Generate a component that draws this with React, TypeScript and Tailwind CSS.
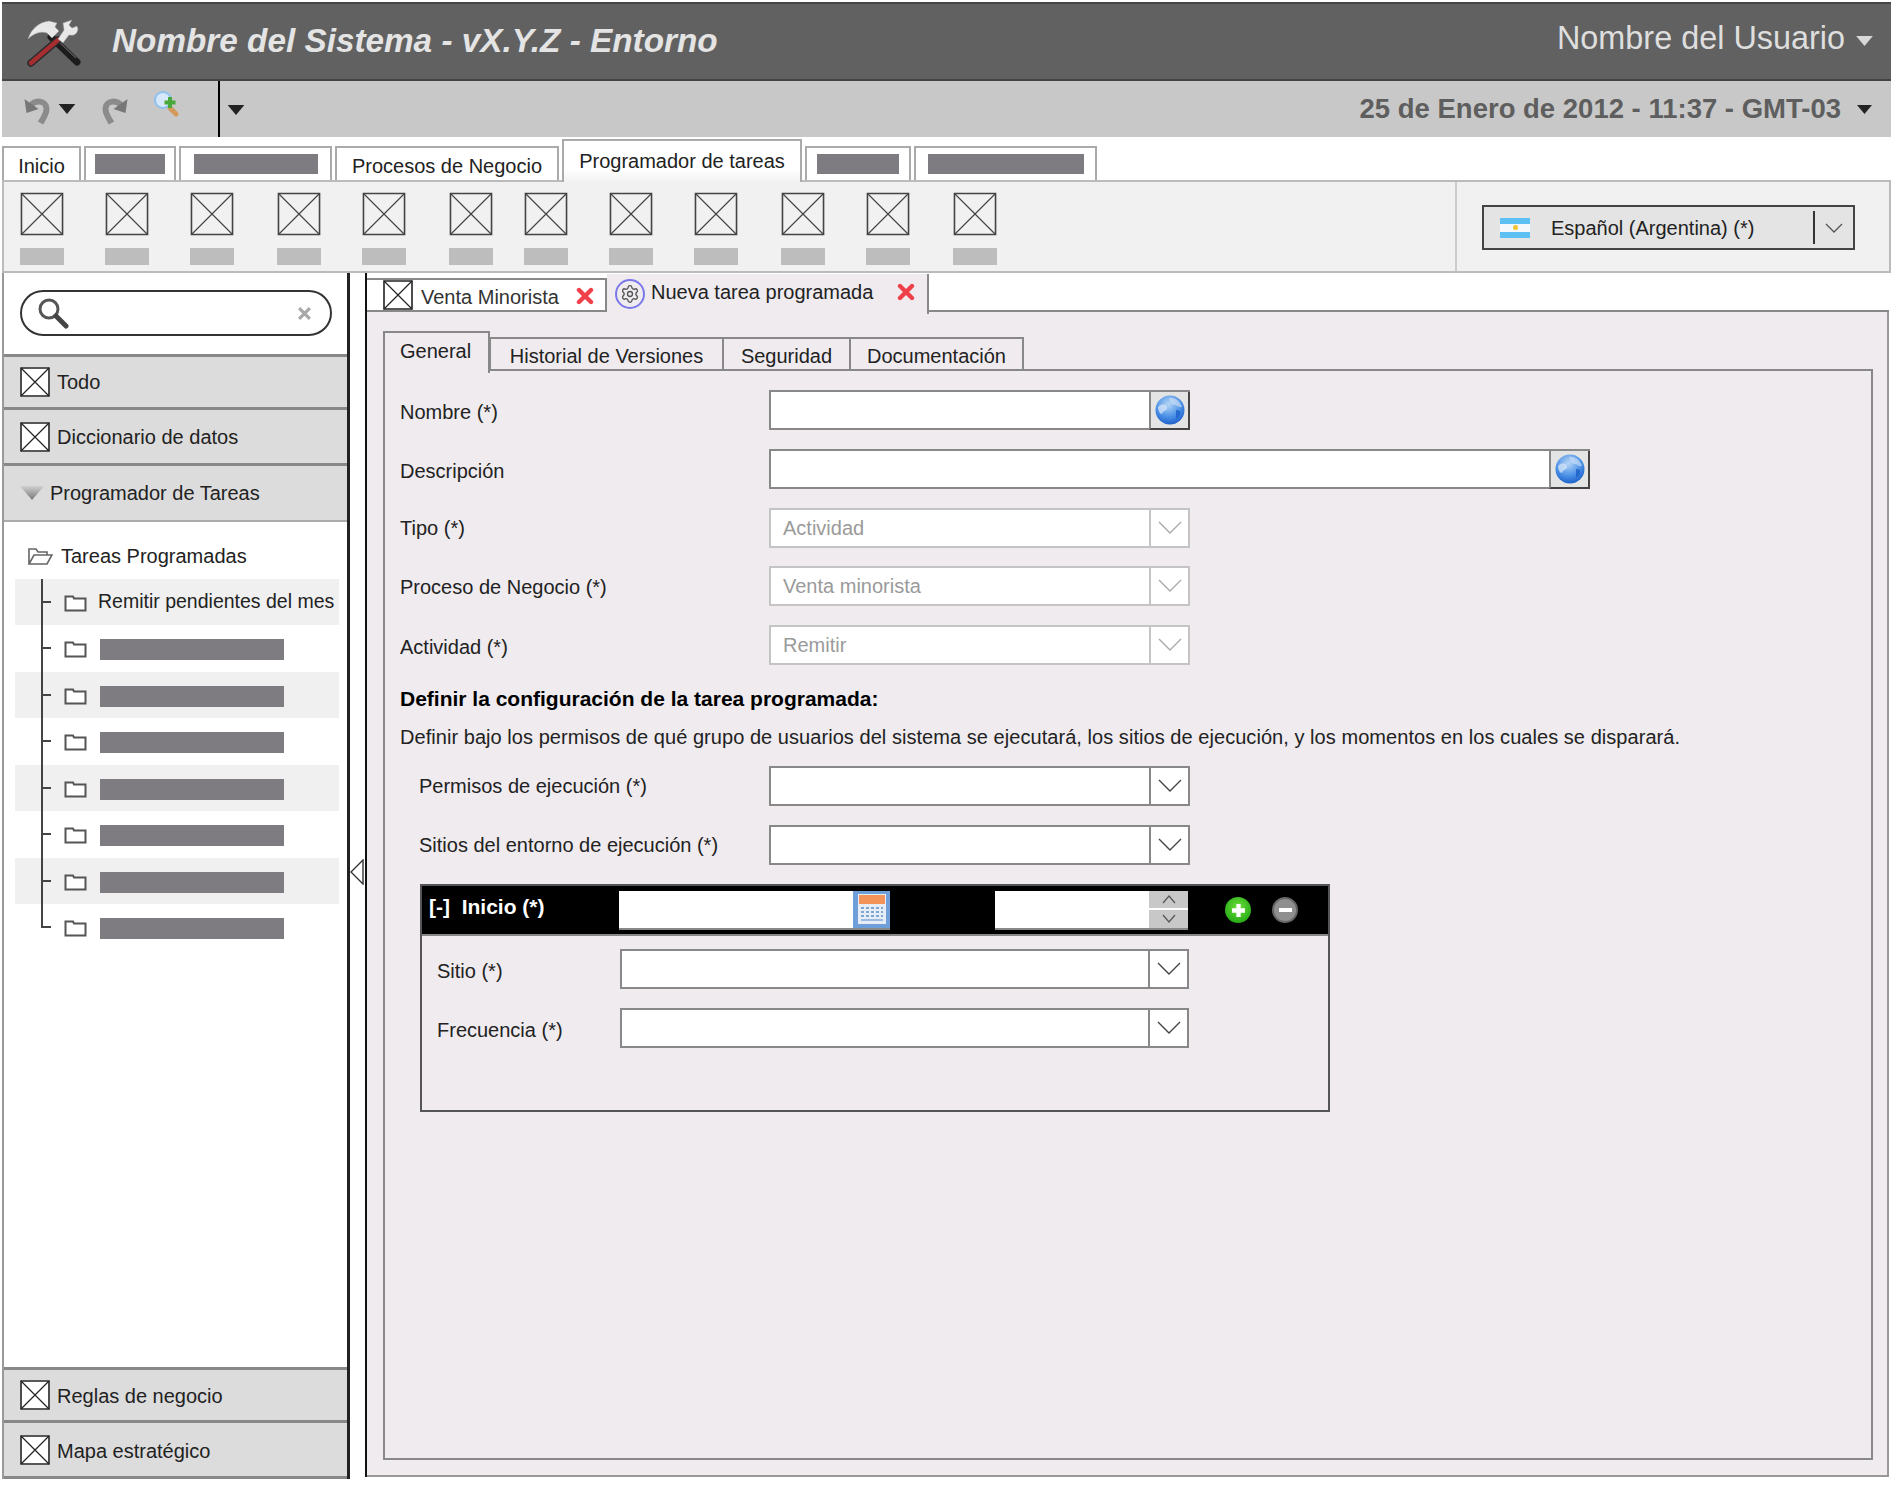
import { Settings } from "lucide-react";

const font = "font-['Liberation_Sans',Arial,sans-serif]";

// placeholder image: box with two diagonals
const XBox = ({ className, stroke = "#222" }: { className: string; stroke?: string }) => (
  <svg viewBox="0 0 30 30" preserveAspectRatio="none" className={className}>
    <rect x="1" y="1" width="28" height="28" fill="none" stroke={stroke} strokeWidth="1.6" vectorEffect="non-scaling-stroke" />
    <path d="M1 1L29 29M29 1L1 29" stroke={stroke} strokeWidth="1.2" vectorEffect="non-scaling-stroke" />
  </svg>
);

const Tri = ({ className, fill = "#222" }: { className: string; fill?: string }) => (
  <svg viewBox="0 0 10 6" className={className}>
    <path d="M0 0H10L5 6Z" fill={fill} />
  </svg>
);

const Chevron = ({ stroke = "#444" }: { stroke?: string }) => (
  <svg viewBox="0 0 24 14" className="w-[24px] h-[14px]">
    <path d="M1 1L12 12L23 1" fill="none" stroke={stroke} strokeWidth="1.4" />
  </svg>
);

const RedX = () => (
  <svg viewBox="0 0 18 18" className="w-[18px] h-[18px]">
    <path d="M3 3L15 15M15 3L3 15" stroke="#f0404a" strokeWidth="4.4" strokeLinecap="round" />
  </svg>
);

const Globe = ({ id }: { id: string }) => (
  <svg viewBox="0 0 30 30" className="w-[30px] h-[30px]">
    <defs>
      <radialGradient id={id} cx="0.45" cy="0.3" r="0.8">
        <stop offset="0" stopColor="#b7d6f5" />
        <stop offset="0.55" stopColor="#4a90e6" />
        <stop offset="1" stopColor="#0f50c0" />
      </radialGradient>
    </defs>
    <circle cx="15" cy="15" r="14.5" fill={`url(#${id})`} />
    <path d="M3 12C7 8 11 9 12 12C13 16 8 15 7 19C5 19 3 16 3 12Z" fill="#d5e6f8" opacity="0.75" />
    <path d="M14 3C20 2 25 6 27 12C23 13 22 10 20 10C17 10 15 7 14 3Z" fill="#d5e6f8" opacity="0.6" />
    <path d="M21 15C24 15 26 16 25 19C24 22 22 24 21 23Z" fill="#1c5fc8" opacity="0.8" />
  </svg>
);

// martillo y llave cruzados
const Logo = () => (
  <svg viewBox="0 0 56 50" className="w-[56px] h-[50px]">
    <path d="M24 20L50 45" stroke="#1c1c1c" strokeWidth="7" strokeLinecap="round" />
    <path d="M28 21L49 41" stroke="#5a5a5a" strokeWidth="1.2" />
    <path d="M4 46L31 23" stroke="#2a2a2a" strokeWidth="7.500" strokeLinecap="round" />
    <path d="M4 46L31 23" stroke="#a62d30" strokeWidth="4.500" strokeLinecap="round" />
    <path d="M1 22C4 12 12 5 22 4L30 6L28 10L32 14L25 21L20 16C14 14 7 16 1 22Z" fill="#e8e8e8" stroke="#999" strokeWidth="0.5" />
    <path d="M31 22L37 13L36 6L45 3L42 8L45 11L50 9L51 12C50 18 46 19 42 18L36 26Z" fill="#e8e8e8" stroke="#999" strokeWidth="0.5" />
  </svg>
);

const Undo = ({ flip }: { flip?: boolean }) => (
  <svg viewBox="0 0 28 32" className={flip ? "w-[29px] h-[32px] -scale-x-100" : "w-[29px] h-[32px]"}>
    <path d="M6 14C11 6 23 7 23 16C23 21 20 25 17 30" fill="none" stroke="#8b8b8b" strokeWidth="6" />
    <path d="M1 6L3 20L15 16Z" fill="#777" />
  </svg>
);

const ZoomPlus = () => (
  <svg viewBox="0 0 26 26" className="w-[26px] h-[26px]">
    <path d="M17 17L23 23" stroke="#d39a5c" strokeWidth="5" strokeLinecap="round" />
    <circle cx="10" cy="9" r="8" fill="#d5e9fb" stroke="#8fc0f0" strokeWidth="2" />
    <path d="M17 6V17M11.500 11.500H22.500" stroke="#49a83a" strokeWidth="4" />
  </svg>
);

const Flag = () => (
  <div className="w-[30px] h-[20px] flex flex-col">
    <div className="h-[6px] bg-[#5cc0f2]" />
    <div className="h-[8px] bg-[#f4f8fb] flex items-center justify-center">
      <div className="w-[5px] h-[5px] rounded-full bg-[#f2c531]" />
    </div>
    <div className="h-[6px] bg-[#5cc0f2]" />
  </div>
);

const Folder = ({ open }: { open?: boolean }) =>
  open ? (
    <svg viewBox="0 0 26 20" className="w-[26px] h-[20px]">
      <path d="M2 18V3H9L11 6H20V9M2 18H20L25 9H7Z" fill="none" stroke="#666" strokeWidth="1.6" />
    </svg>
  ) : (
    <svg viewBox="0 0 23 18" className="w-[23px] h-[18px] mt-[2px]">
      <path d="M1.500 3V16.500H21.500V4.500H10L9 2.500H1.500Z" fill="#fff" stroke="#555" strokeWidth="2" />
    </svg>
  );

const Bar = ({ className }: { className: string }) => <div className={`bg-[#7e7c80] ${className}`} />;

const ribbonCells = [
  "w-[85px]", "w-[85px]", "w-[87px]", "w-[85px]", "w-[87px]", "w-[75px]",
  "w-[85px]", "w-[85px]", "w-[87px]", "w-[85px]", "w-[87px]", "w-[60px]",
];

const Accordion = ({ label, top, textClass = "" }: { label: string; top?: boolean; textClass?: string }) => (
  <div className={`h-[56px] shrink-0 bg-[#dcdcdc] border-b-[3px] border-[#888] flex items-center pl-[16px] gap-[7px] text-[20px] text-[#222] ${top ? "border-t-[3px]" : ""}`}>
    <XBox className="w-[30px] h-[30px] bg-white" />
    <span className={textClass}>{label}</span>
  </div>
);

// text field with a button cell on the right
const Field = ({
  width,
  value,
  disabled,
  children,
  btnClass = "bg-white",
}: {
  width: string;
  value?: string;
  disabled?: boolean;
  children: React.ReactNode;
  btnClass?: string;
}) => (
  <div className={`${width} h-[40px] flex border-2 bg-white ${disabled ? "border-[#c4c4c4]" : "border-[#888]"}`}>
    <div className={`flex-1 flex items-center pl-[12px] text-[20px] ${disabled ? "text-[#9a9a9a]" : ""}`}>{value}</div>
    <div className={`w-[39px] flex items-center justify-center border-l-2 ${disabled ? "border-[#c4c4c4]" : "border-[#888]"} ${btnClass}`}>
      {children}
    </div>
  </div>
);

const FormRow = ({
  label,
  className = "",
  labelWidth = "w-[369px]",
  children,
}: {
  label: string;
  className?: string;
  labelWidth?: string;
  children: React.ReactNode;
}) => (
  <div className={`flex items-center h-[40px] ${className}`}>
    <div className={`${labelWidth} text-[20px] text-[#222] shrink-0`}>{label}</div>
    {children}
  </div>
);

const tree = [0, 1, 2, 3, 4, 5, 6];
const globeBtn = "bg-[#e4e4e4] border-r-2 border-b-2 border-r-[#444] border-b-[#444] -mr-[2px] -mb-[2px] min-w-[41px]";

export default function App() {
  return (
    <div className={`${font} w-[1898px] h-[1485px] bg-white pt-[2px] pl-[2px] pr-[7px] flex flex-col overflow-hidden text-[#222]`}>
      {/* cabecera */}
      <div className="h-[79px] shrink-0 bg-[#616161] border-y-2 border-[#444] flex items-center pl-[25px] pr-[18px]">
        <Logo />
        <div className="ml-[29px] text-[33.3px] font-bold italic text-[#e4e4e4] -mt-[2px]">Nombre del Sistema - vX.Y.Z - Entorno</div>
        <div className="ml-auto flex items-center gap-[11px] -mt-[6px]">
          <span className="text-[32.4px] text-[#dedede]">Nombre del Usuario</span>
          <Tri className="w-[17px] h-[10px] mt-[6px]" fill="#d8d8d8" />
        </div>
      </div>

      {/* barra de herramientas */}
      <div className="h-[56px] shrink-0 bg-[#c8c8c8] flex items-stretch pl-[21px] pr-[17px]">
        <div className="flex items-center w-[195px]">
          <Undo />
          <Tri className="w-[18px] h-[10px] ml-[6px]" />
          <div className="ml-[24px]">
            <Undo flip />
          </div>
          <div className="ml-[24px] -mt-[11px]">
            <ZoomPlus />
          </div>
        </div>
        <div className="w-[2px] bg-black" />
        <div className="flex items-center ml-[7px]">
          <Tri className="w-[18px] h-[10px] mt-[2px]" />
        </div>
        <div className="ml-auto flex items-center gap-[14px]">
          <span className="text-[27.5px] font-bold text-[#5e5e5e]">25 de Enero de 2012 - 11:37 - GMT-03</span>
          <Tri className="w-[19px] h-[9px]" />
        </div>
      </div>

      {/* pestañas principales */}
      <div className="h-[43px] shrink-0 flex items-end gap-[3px] text-[20px] relative z-10">
        <div className="w-[79px] h-[34px] pt-[4px] border-2 border-b-0 border-[#aaa] flex items-center justify-center">Inicio</div>
        <div className="w-[92px] h-[34px] border-2 border-b-0 border-[#aaa] flex items-center justify-center">
          <Bar className="w-[70px] h-[20px]" />
        </div>
        <div className="w-[153px] h-[34px] border-2 border-b-0 border-[#aaa] flex items-center justify-center">
          <Bar className="w-[124px] h-[20px]" />
        </div>
        <div className="w-[224px] h-[34px] pt-[4px] border-2 border-b-0 border-[#aaa] flex items-center justify-center">Procesos de Negocio</div>
        <div className="w-[240px] h-[43px] -mb-[2px] border-2 border-b-0 border-[#aaa] bg-linear-to-b from-white from-70% to-[#f1f1f1] flex items-start pt-[5px] justify-center">Programador de tareas</div>
        <div className="w-[106px] h-[34px] border-2 border-b-0 border-[#aaa] flex items-center justify-center">
          <Bar className="w-[82px] h-[20px]" />
        </div>
        <div className="w-[183px] h-[34px] border-2 border-b-0 border-[#aaa] flex items-center justify-center">
          <Bar className="w-[156px] h-[20px]" />
        </div>
      </div>

      {/* cinta de iconos */}
      <div className="h-[93px] shrink-0 bg-[#f1f1f1] border-2 border-[#bbb] flex">
        <div className="w-[1451px] flex pl-[16px] pt-[10px]">
          {ribbonCells.map((w, i) => (
            <div key={i} className={`${w} shrink-0`}>
              <XBox className="w-[44px] h-[44px] block" stroke="#444" />
              <div className="w-[44px] h-[17px] mt-[12px] bg-[#bdbdbd]" />
            </div>
          ))}
        </div>
        <div className="flex-1 border-l-2 border-[#ccc] flex items-center pl-[25px]">
          <div className="w-[373px] h-[45px] mt-[2px] bg-[#e4e4e4] border-2 border-[#444] flex items-center pl-[16px] text-[20px]">
            <Flag />
            <span className="ml-[21px]">Español (Argentina) (*)</span>
            <div className="ml-auto h-[33px] border-l-2 border-[#333] w-[40px] flex items-center justify-center">
              <svg viewBox="0 0 18 10" className="w-[18px] h-[10px]">
                <path d="M1 1L9 9L17 1" fill="none" stroke="#555" strokeWidth="1.3" />
              </svg>
            </div>
          </div>
        </div>
      </div>

      <div className="flex-1 min-h-0 flex pb-[6px]">
        {/* panel lateral */}
        <div className="w-[348px] shrink-0 border-l-2 border-r-[3px] border-l-[#999] border-r-[#222] flex flex-col">
          <div className="h-[81px] shrink-0 flex items-start pl-[16px] pt-[17px]">
            <div className="w-[312px] h-[46px] rounded-full border-2 border-[#333] flex items-center pl-[15px] pr-[18px] justify-between">
              <svg viewBox="0 0 32 32" className="w-[32px] h-[32px]">
                <circle cx="12" cy="12" r="9" fill="#fff" stroke="#555" strokeWidth="3" />
                <path d="M19 19L29 29" stroke="#444" strokeWidth="5" strokeLinecap="round" />
              </svg>
              <svg viewBox="0 0 14 14" className="w-[15px] h-[15px]">
                <path d="M2 2L12 12M12 2L2 12" stroke="#a8a8a8" strokeWidth="3" />
              </svg>
            </div>
          </div>
          <Accordion label="Todo" top />
          <Accordion label="Diccionario de datos" />
          <div className="h-[56px] shrink-0 bg-[#dcdcdc] border-b-2 border-[#aaa] flex items-center pl-[16px] gap-[6px] text-[20px]">
            <svg viewBox="0 0 24 14" className="w-[24px] h-[14px]">
              <defs>
                <linearGradient id="acc" x1="0" y1="0" x2="0" y2="1">
                  <stop offset="0" stopColor="#cfcfcf" />
                  <stop offset="1" stopColor="#777" />
                </linearGradient>
              </defs>
              <path d="M0 0H24L12 14Z" fill="url(#acc)" />
            </svg>
            <span>Programador de Tareas</span>
          </div>

          <div className="flex-1 min-h-0 pl-[11px] pt-[19px] pr-[8px]">
            <div className="flex items-center h-[30px] pl-[12px] gap-[8px] text-[20px]">
              <Folder open />
              <span>Tareas Programadas</span>
            </div>
            <div className="flex flex-col mt-[8px]">
              <div className="h-[46px] bg-[#f0f0f0] flex items-center relative">
                <div className="absolute left-[26px] top-0 bottom-0 w-[2px] bg-[#444]" />
                <div className="w-[10px] h-[2px] bg-[#444] ml-[26px] mr-[13px]" />
                <Folder />
                <span className="ml-[11px] text-[19.5px] whitespace-nowrap">Remitir pendientes del mes</span>
              </div>
              {tree.map((i) => (
                <div key={i} className={`h-[46.5px] flex items-center relative ${i % 2 === 0 ? "" : "bg-[#f0f0f0]"}`}>
                  <div className={`absolute left-[26px] top-0 w-[2px] bg-[#444] ${i === 6 ? "h-[24px]" : "bottom-0"}`} />
                  <div className="w-[10px] h-[2px] bg-[#444] ml-[26px] mr-[13px]" />
                  <Folder />
                  <Bar className="ml-[13px] mt-[3px] w-[184px] h-[21px]" />
                </div>
              ))}
            </div>
          </div>

          <Accordion label="Reglas de negocio" top textClass="mt-[2px]" />
          <Accordion label="Mapa estratégico" textClass="mt-[2px]" />
        </div>

        {/* separador */}
        <div className="w-[15px] shrink-0 flex items-center">
          <svg viewBox="0 0 14 26" className="w-[14px] h-[26px] -mt-[8px]">
            <path d="M13 1L1 13L13 25Z" fill="#fff" stroke="#333" strokeWidth="1.4" />
          </svg>
        </div>

        {/* contenido */}
        <div className="w-[1524px] shrink-0 flex flex-col border-l-[2px] border-[#111] mb-[2px]">
          <div className="h-[39px] shrink-0 flex items-end text-[20px] relative z-10">
            <div className="w-[240px] h-[34px] border-y-2 border-r-2 border-[#888] flex items-center pl-[16px] text-[#333]">
              <XBox className="w-[30px] h-[30px] bg-white" />
              <span className="ml-[8px] mt-[3px] whitespace-nowrap">Venta Minorista</span>
              <div className="ml-auto mr-[11px] mt-[1px]"><RedX /></div>
            </div>
            <div className="w-[322px] h-[40px] -mb-[2px] bg-[#efebef] border-r-2 border-[#888] flex items-center pl-[8px] -mt-[2px]">
              <div className="w-[30px] h-[30px] rounded-full border-2 border-[#7b78ea] flex items-center justify-center">
                <Settings className="w-[20px] h-[20px] text-[#555]" strokeWidth={1.6} />
              </div>
              <span className="ml-[6px] -mt-[5px] whitespace-nowrap">Nueva tarea programada</span>
              <div className="ml-auto mr-[12px] -mt-[5px]"><RedX /></div>
            </div>
            <div className="flex-1 border-b-2 border-[#888]" />
          </div>

          <div className="flex-1 min-h-0 bg-[#efebef] border-r-2 border-b-2 border-[#999] pl-[16px] pr-[14px] pt-[19px] pb-[15px] flex flex-col">
            {/* pestañas internas */}
            <div className="h-[40px] shrink-0 flex items-end text-[20px] relative z-10">
              <div className="w-[107px] h-[42px] -mb-[2px] bg-[#efebef] border-2 border-b-0 border-[#888] flex items-start pt-[3px] pl-[15px]">General</div>
              <div className="w-[235px] h-[34px] pt-[3px] border-2 border-[#888] -ml-[1px] flex items-center justify-center">Historial de Versiones</div>
              <div className="w-[127px] h-[34px] pt-[3px] border-y-2 border-r-2 border-[#888] flex items-center justify-center">Seguridad</div>
              <div className="w-[173px] h-[34px] pt-[3px] border-y-2 border-r-2 border-[#888] flex items-center justify-center">Documentación</div>
              <div className="flex-1 border-b-2 border-[#888]" />
            </div>

            <div className="flex-1 min-h-0 border-2 border-t-0 border-[#888] pl-[15px] pt-[19px]">
              <FormRow label="Nombre (*)" labelWidth="w-[369px] pt-[3px]">
                <Field width="w-[421px]" btnClass={globeBtn}><Globe id="g1" /></Field>
              </FormRow>
              <FormRow label="Descripción" labelWidth="w-[369px] pt-[3px]" className="mt-[19px]">
                <Field width="w-[821px]" btnClass={globeBtn}><Globe id="g2" /></Field>
              </FormRow>
              <FormRow label="Tipo (*)" className="mt-[19px]">
                <Field width="w-[421px]" value="Actividad" disabled><Chevron stroke="#aaa" /></Field>
              </FormRow>
              <FormRow label="Proceso de Negocio (*)" labelWidth="w-[369px] pt-[2px]" className="mt-[18px]">
                <Field width="w-[421px]" value="Venta minorista" disabled><Chevron stroke="#aaa" /></Field>
              </FormRow>
              <FormRow label="Actividad (*)" labelWidth="w-[369px] pt-[3px]" className="mt-[19px]">
                <Field width="w-[421px]" value="Remitir" disabled><Chevron stroke="#aaa" /></Field>
              </FormRow>

              <div className="mt-[18px] text-[21px] leading-[32px] font-bold text-black">Definir la configuración de la tarea programada:</div>
              <div className="mt-[7px] text-[20px] leading-[30px] tracking-[0.05px] text-[#222] whitespace-nowrap">Definir bajo los permisos de qué grupo de usuarios del sistema se ejecutará, los sitios de ejecución, y los momentos en los cuales se disparará.</div>

              <div className="pl-[20px]">
                <FormRow label="Permisos de ejecución (*)" labelWidth="w-[349px] -ml-[1px] mr-[1px]" className="mt-[14px]">
                  <Field width="w-[421px]"><Chevron /></Field>
                </FormRow>
                <FormRow label="Sitios del entorno de ejecución (*)" labelWidth="w-[349px] -ml-[1px] mr-[1px]" className="mt-[19px]">
                  <Field width="w-[421px]"><Chevron /></Field>
                </FormRow>

                {/* bloque Inicio */}
                <div className="mt-[19px] w-[910px] h-[228px] border-2 border-[#555] flex flex-col">
                  <div className="h-[50px] shrink-0 bg-black border-b-2 border-[#888] flex items-center text-white font-bold text-[21px]">
                    <span className="ml-[7px] w-[190px] -mt-[6px] whitespace-nowrap">[-]&nbsp; Inicio (*)</span>
                    <div className="w-[271px] h-[39px] bg-white flex justify-end border-b-2 border-[#888]">
                      <div className="w-[37px] h-[37px] bg-[#6f9fd8] flex items-center justify-center">
                        <svg viewBox="0 0 28 30" className="w-[28px] h-[30px]">
                          <rect width="28" height="30" fill="#e6edf6" />
                          <rect x="1" y="1" width="26" height="9" fill="#f3935a" />
                          <path d="M3 14H25M3 18H25M3 22H25" stroke="#7da7d4" strokeWidth="2" strokeDasharray="3 2" />
                          <rect x="3" y="25" width="22" height="2" fill="#9bbce0" />
                        </svg>
                      </div>
                    </div>
                    <div className="ml-[105px] w-[193px] h-[39px] bg-white flex border-b-2 border-[#888]">
                      <div className="flex-1" />
                      <div className="w-[39px] flex flex-col bg-[#c8c8c8]">
                        <div className="flex-1 flex items-center justify-center border-b-2 border-white">
                          <svg viewBox="0 0 14 9" className="w-[14px] h-[9px]"><path d="M1 8L7 1L13 8" fill="none" stroke="#555" strokeWidth="1.2" /></svg>
                        </div>
                        <div className="flex-1 flex items-center justify-center">
                          <svg viewBox="0 0 14 9" className="w-[14px] h-[9px]"><path d="M1 1L7 8L13 1" fill="none" stroke="#555" strokeWidth="1.2" /></svg>
                        </div>
                      </div>
                    </div>
                    <div className="ml-[37px] w-[26px] h-[26px] rounded-full bg-[radial-gradient(circle_at_50%_40%,#6fe03c,#0f9a0c)] flex items-center justify-center">
                      <svg viewBox="0 0 14 14" className="w-[15px] h-[15px]"><path d="M7 1V13M1 7H13" stroke="#fff" strokeWidth="4" /></svg>
                    </div>
                    <div className="ml-[21px] w-[26px] h-[26px] rounded-full bg-[#8f8f8f] border-2 border-[#666] flex items-center justify-center">
                      <div className="w-[13px] h-[4px] bg-white" />
                    </div>
                  </div>
                  <div className="pl-[15px] pt-[13px]">
                    <FormRow label="Sitio (*)" labelWidth="w-[183px] pt-[4px]">
                      <Field width="w-[569px]"><Chevron /></Field>
                    </FormRow>
                    <FormRow label="Frecuencia (*)" labelWidth="w-[183px] pt-[4px]" className="mt-[19px]">
                      <Field width="w-[569px]"><Chevron /></Field>
                    </FormRow>
                  </div>
                </div>
              </div>
            </div>
          </div>
        </div>
      </div>
    </div>
  );
}
